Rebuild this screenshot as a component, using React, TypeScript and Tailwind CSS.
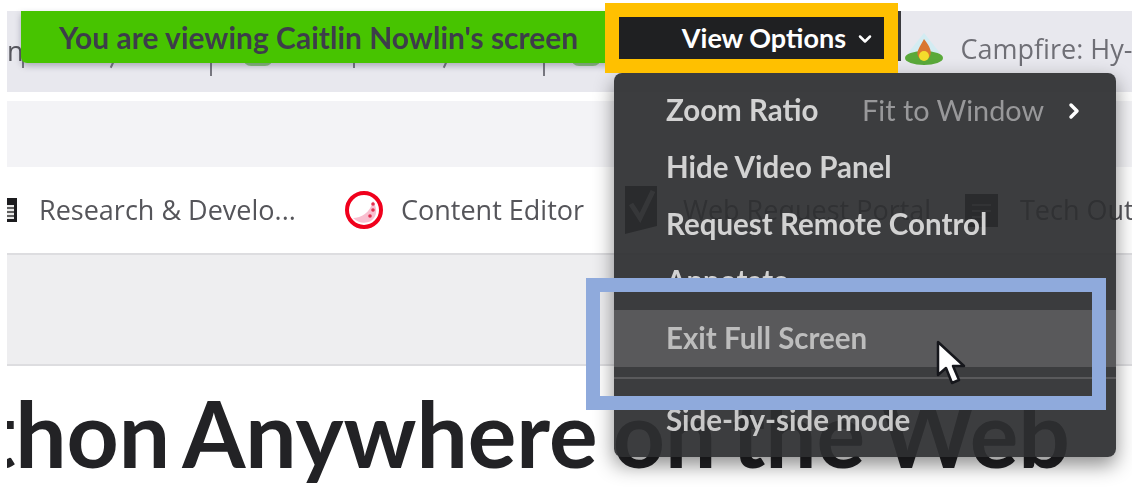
import { ChevronDown, ChevronRight } from "lucide-react";

function Tick({ className }: { className: string }) {
  return <div className={`w-[2px] bg-[#77777f] shrink-0 ${className}`} />;
}

function CampfireIcon() {
  return (
    <svg width="42" height="40" viewBox="0 0 42 40" className="shrink-0">
      <path d="M5 24 L21 4 L37 24 Z" fill="#d3ecf2" />
      <ellipse cx="21" cy="29" rx="19" ry="7" fill="#5aa93a" />
      <path d="M21 10 C27 18 29 22 27 27 C25 32 17 32 15 27 C13 22 17 18 21 10 Z" fill="#d9772f" />
      <ellipse cx="21" cy="27" rx="5" ry="5" fill="#f4dc2c" />
    </svg>
  );
}

function CalendarIcon() {
  return (
    <svg width="10" height="24" viewBox="0 0 10 24" className="shrink-0">
      <rect x="-12" y="0" width="22" height="24" fill="#1c1c1f" />
      <rect x="0" y="7" width="7" height="14" fill="#e8e8e8" />
      <path d="M0 10h7M0 14h7M0 18h7" stroke="#333" strokeWidth="1.5" />
    </svg>
  );
}

function RingIcon() {
  return (
    <svg width="38" height="38" viewBox="0 0 38 38" className="shrink-0">
      <circle cx="19" cy="19" r="17" fill="#fff" stroke="#f0001c" strokeWidth="4" />
      <path d="M8 27 C16 27 25 22 28 10 C33 18 32 26 26 30 C20 33 13 32 8 27 Z" fill="#f9bfd0" />
      <circle cx="28" cy="13" r="1.8" fill="#e2304f" />
      <circle cx="28" cy="19" r="1.8" fill="#e2304f" />
      <circle cx="25" cy="25" r="1.8" fill="#e2304f" />
    </svg>
  );
}

function PortalIcon() {
  return (
    <svg width="32" height="48" viewBox="0 0 32 48" className="shrink-0">
      <path d="M0 0 H32 V40 L0 48 Z" fill="#000" />
      <path d="M6 18 L15 32 L28 5" fill="none" stroke="#aaa" strokeWidth="5" />
    </svg>
  );
}

function DocIcon() {
  return (
    <svg width="33" height="33" viewBox="0 0 33 33" className="shrink-0">
      <rect width="33" height="33" fill="#000" />
      <path d="M7 11h19M7 17h19M7 23h13" stroke="#777" strokeWidth="2" />
    </svg>
  );
}

function Bookmark({ icon, label, className }: { icon: React.ReactNode; label: string; className: string }) {
  return (
    <div className={`flex items-center shrink-0 whitespace-nowrap ${className}`}>
      {icon}
      <span>{label}</span>
    </div>
  );
}

function MenuRow({ children, className = "" }: { children: React.ReactNode; className?: string }) {
  return <div className={`relative flex items-center h-[57px] pl-[52px] pr-[30px] ${className}`}>{children}</div>;
}

function ZoomControls() {
  return (
    <>
      {/* bits of the tab strip peeking out under the banner */}
      <div className="absolute left-[243px] top-[58px] w-[30px] h-[8px] rounded-b-full bg-[#8cc47c]" />
      <div className="absolute left-[571px] top-[58px] w-[30px] h-[8px] rounded-b-full bg-[#8cc47c]" />
      <div className="absolute left-[111px] top-[62px] w-[2px] h-[6px] rotate-[25deg] bg-[#77777f]" />
      <div className="absolute left-[444px] top-[62px] w-[2px] h-[6px] rotate-[25deg] bg-[#77777f]" />
      <div className="absolute left-[21px] top-[11px] w-[600px] h-[52px] flex items-center pl-[38px] bg-[#47c400] rounded-b-[6px] shadow-[0_3px_6px_rgba(60,60,90,0.35)] text-[#3d3d4a] text-[30px] font-bold whitespace-nowrap">
        You are viewing Caitlin Nowlin's screen
      </div>
      <div className="absolute left-[605px] top-[3px] w-[293px] h-[70px] bg-[#1f2022] flex items-center justify-end pr-[23px] text-white text-[27px] font-bold whitespace-nowrap">
        View Options
        <ChevronDown className="ml-[9px] mt-[2px]" size={20} strokeWidth={3} />
      </div>
      <div className="absolute left-[898px] top-[11px] w-[3px] h-[50px] bg-[#3a3a3e]" />
      <div className="absolute left-[614px] top-[73px] w-[502px] h-[384px] pt-[9px] rounded-[8px] bg-[#2d2e30]/[.93] shadow-[0_8px_20px_rgba(0,0,0,0.45)] text-[#d2d2d2] text-[29.5px] font-bold whitespace-nowrap">
        <MenuRow className="justify-between">
          <span>Zoom Ratio</span>
          <span className="flex items-center text-[#98989a] ml-auto font-normal text-[28.8px]">
            Fit to Window
            <ChevronRight className="ml-[18px] text-white" size={24} strokeWidth={3.5} />
          </span>
        </MenuRow>
        <MenuRow>Hide Video Panel</MenuRow>
        <MenuRow>Request Remote Control</MenuRow>
        <MenuRow>Annotate</MenuRow>
        <MenuRow className="bg-[#59595b] text-[#bdbdbd]">
          Exit Full Screen
          <svg width="32" height="46" viewBox="0 0 32 46" className="absolute left-[321px] top-[30px]">
            <path d="M3 2 V35 L11 28 L17 43 L24 40 L18 26 L29 26 Z" fill="#fff" stroke="#16171c" strokeWidth="2.5" strokeLinejoin="round" />
          </svg>
        </MenuRow>
        <div className="h-[2px] mt-[10px] mb-[13px] bg-[#5a5a5c]" />
        <MenuRow className="text-[#c8c8c8]">Side-by-side mode</MenuRow>
      </div>
    </>
  );
}

export default function App() {
  return (
    <div className="relative w-[1132px] h-[488px] overflow-hidden bg-white">
      <div className="h-full pt-[11px] pl-[7px] blur-[0.5px] font-['Lato',sans-serif]">
        <div className="flex items-start h-[81px] bg-[#e8e8ee] font-['Open_Sans',sans-serif] text-[27px] text-[#6f6f76] overflow-hidden">
          <span className="mt-[22px] text-[#55555c] leading-[36px]">n</span>
          <Tick className="h-[10px] mt-[47px] ml-[-2px]" />
          <Tick className="h-[18px] mt-[47px] ml-[186px]" />
          <Tick className="h-[10px] mt-[47px] ml-[141px]" />
          <Tick className="h-[18px] mt-[47px] ml-[188px]" />
          <div className="flex items-center ml-[358px] mt-[18px] gap-[16px] whitespace-nowrap">
            <CampfireIcon />
            <span>Campfire: Hy-</span>
          </div>
        </div>
        <div className="h-[66px] mt-[9px] bg-[#f3f3f6]" />
        <div className="flex items-center h-[86px] text-[27px] text-[#55555a] font-['Open_Sans',sans-serif] overflow-hidden">
          <Bookmark className="w-[338px] gap-[22px]" icon={<CalendarIcon />} label="Research & Develo..." />
          <Bookmark className="w-[280px] gap-[18px]" icon={<RingIcon />} label="Content Editor" />
          <Bookmark className="w-[340px] gap-[26px]" icon={<PortalIcon />} label="Web Request Portal" />
          <Bookmark className="gap-[22px]" icon={<DocIcon />} label="Tech Outlook" />
        </div>
        <div className="h-[113px] bg-[#eeeef0] border-y-2 border-[#dddde0]" />
        <div className="flex justify-end pr-[62px] mt-[17px] whitespace-nowrap overflow-hidden text-[91px] leading-[100px] font-bold text-[#222225] [word-spacing:-7px]">
          Python Anywhere on the Web
        </div>
        <ZoomControls />
      </div>
      <div className="absolute left-[605px] top-[3px] w-[293px] h-[70px] border-[14px] border-[#ffc000]" />
      <div className="absolute left-[586px] top-[278px] w-[520px] h-[132px] border-[14px] border-[#8faadc]" />
    </div>
  );
}
